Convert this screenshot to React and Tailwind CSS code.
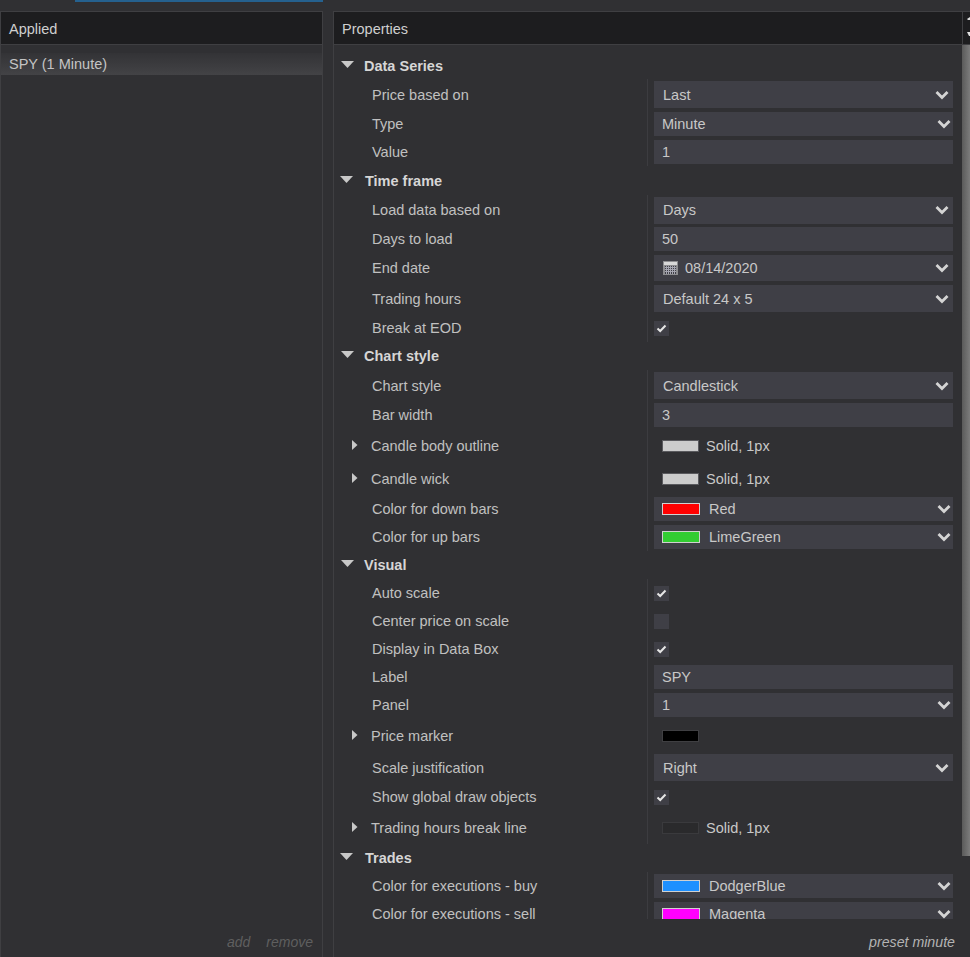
import React from 'react';

const Chevron = () => (
  <svg width="14" height="10" viewBox="0 0 14 10" className="shrink-0">
    <path d="M1.5 2 L7 7.5 L12.5 2" fill="none" stroke="#d4d4d4" strokeWidth="2.8" />
  </svg>
);

const Caret = ({ open }) =>
  open ? (
    <svg width="14" height="8" viewBox="0 0 14 8" className="-mt-[2px] shrink-0">
      <path d="M0 0 H13 L6.5 7 Z" fill="#c8c8c8" />
    </svg>
  ) : (
    <svg width="6" height="10" viewBox="0 0 6 10" className="-mt-[1px] shrink-0">
      <path d="M0 0 L5.5 5 L0 10 Z" fill="#c8c8c8" />
    </svg>
  );

const CalendarIcon = () => (
  <svg width="15" height="14" viewBox="0 0 15 14" className="shrink-0">
    <rect x="0" y="0" width="15" height="14" fill="#8d8d90" />
    <rect x="1" y="1" width="13" height="3" fill="#d8d8d8" />
    <rect x="2" y="5" width="11" height="8" fill="#3f3f46" />
    <path d="M2 6.5 H13 M2 8.5 H13 M2 10.5 H13 M3.5 5 V13 M5.5 5 V13 M7.5 5 V13 M9.5 5 V13 M11.5 5 V13" stroke="#a5a5b0" strokeWidth="1" />
  </svg>
);

const Checkbox = ({ checked }) => (
  <div className="flex h-[15px] w-[15px] items-center justify-center bg-[#3f3f46]">
    {checked && (
      <svg width="11" height="9" viewBox="0 0 11 9">
        <path d="M1.5 4.5 L4.2 7 L9.5 1.5" fill="none" stroke="#e6e6e6" strokeWidth="2" />
      </svg>
    )}
  </div>
);

const Swatch = ({ color }) => (
  <span className={`h-[12px] w-[38px] shrink-0 border border-[#d0d0d0] ${color}`} />
);

// the taller selects sit 1px further in than the short ones
const Select = ({ tall, h = 'h-[27px]', children }) => (
  <div className={`flex ${tall ? `${h} pl-[9px] pr-[4px]` : 'h-[24px] pl-2 pr-[2px]'} items-center justify-between bg-[#3f3f46] text-[#c8c8c8]`}>
    <div className="flex items-center gap-[9px]">{children}</div>
    <Chevron />
  </div>
);

const Text = ({ children, className = '' }) => <span className={`pt-[1px] ${className}`}>{children}</span>;

const Input = ({ children }) => (
  <div className="flex h-[24px] items-center bg-[#3f3f46] pl-2 text-[#c8c8c8]">
    <Text>{children}</Text>
  </div>
);

const Group = ({ h, label, pad = 'pl-[7px]', gap = 'gap-[9px]' }) => (
  <div className={`flex ${h} items-center ${gap} ${pad} font-bold text-[#d6d6d6]`}>
    <Caret open />
    <Text>{label}</Text>
  </div>
);

const Row = ({ h, label, expand, children }) => (
  <div className={`flex ${h} items-stretch`}>
    <div className={`flex w-[313px] shrink-0 items-center text-[#c0c0c0] ${expand ? 'gap-[13px] pl-[18px]' : 'pl-[38px]'}`}>
      {expand && <Caret />}
      <Text>{label}</Text>
    </div>
    <div className="flex min-w-0 flex-1 flex-col justify-center border-l border-[#3c3c40] pl-[6px]">{children}</div>
  </div>
);

const LineValue = ({ color, border }) => (
  <div className="flex items-center gap-[7px] pl-2 text-[#c8c8c8]">
    <span className={`h-[12px] w-[37px] shrink-0 border ${border} ${color}`} />
    <Text>Solid, 1px</Text>
  </div>
);

const App = () => {
  return (
    <div className="flex h-[957px] w-[970px] flex-col overflow-hidden bg-[#303033] font-['Liberation_Sans',Arial,sans-serif] text-[14.5px] leading-none">
      <div className="h-[11px] shrink-0">
        <div className="ml-[75px] h-[2px] w-[248px] bg-[#25618f]" />
      </div>
      <div className="flex min-h-0 flex-1">
        <section className="flex w-[323px] shrink-0 flex-col border-t border-r border-l border-[#3f3f42]">
          <div className="flex h-[33px] shrink-0 items-center border-b border-[#3f3f42] bg-[#1d1d1f] pt-[2px] pl-2 text-[#cfcfcf]">Applied</div>
          <div className="mt-2 flex h-[22px] items-center bg-gradient-to-b from-[#333336] to-[#434346] pl-2 text-[#c4c4c4]">SPY (1 Minute)</div>
          <div className="mt-auto flex h-[30px] items-center justify-end gap-[16px] pr-[9px] text-[14px] italic text-[#5f5f5f]">
            <span>add</span>
            <span>remove</span>
          </div>
        </section>
        <section className="ml-[10px] flex min-w-0 flex-1 flex-col border-t border-l border-[#3f3f42]">
          <div className="flex h-[33px] shrink-0 items-stretch border-b border-[#3f3f42] bg-[#1d1d1f] text-[#cfcfcf]">
            <span className="flex flex-1 items-center pt-[2px] pl-2">Properties</span>
            <div className="w-[8px] shrink-0 border-l border-[#3f3f42]">
              <svg width="7" height="32" viewBox="0 0 7 32">
                <path d="M4 7 L7 5 V8 H5 Z M4 20 H7 V24 H6 Z" fill="#e0e0e0" />
              </svg>
            </div>
          </div>
          <div className="flex h-[874px] shrink-0 overflow-hidden">
            <div className="min-w-0 flex-1 pt-[7px] pr-[9px]">
              <Group h="h-[27px]" label="Data Series" />
              <Row h="h-[31px]" label="Price based on"><Select tall><Text>Last</Text></Select></Row>
              <Row h="h-[28px]" label="Type"><Select><Text>Minute</Text></Select></Row>
              <Row h="h-[28px]" label="Value"><Input>1</Input></Row>
              <Group h="h-[29px]" label="Time frame" pad="pl-[6px]" gap="gap-[11px]" />
              <Row h="h-[30px]" label="Load data based on"><Select tall><Text>Days</Text></Select></Row>
              <Row h="h-[28px]" label="Days to load"><Input>50</Input></Row>
              <Row h="h-[30px]" label="End date"><Select tall h="h-[26px]"><CalendarIcon /><Text className="-ml-[2px]">08/14/2020</Text></Select></Row>
              <Row h="h-[31px]" label="Trading hours"><Select tall><Text>Default 24 x 5</Text></Select></Row>
              <Row h="h-[28px]" label="Break at EOD"><Checkbox checked /></Row>
              <Group h="h-[28px]" label="Chart style" />
              <Row h="h-[31px]" label="Chart style"><Select tall><Text>Candlestick</Text></Select></Row>
              <Row h="h-[28px]" label="Bar width"><Input>3</Input></Row>
              <Row h="h-[33px]" label="Candle body outline" expand><LineValue color="bg-[#cccccc]" border="border-[#5a5a5e]" /></Row>
              <Row h="h-[33px]" label="Candle wick" expand><LineValue color="bg-[#cccccc]" border="border-[#5a5a5e]" /></Row>
              <Row h="h-[28px]" label="Color for down bars"><Select><Swatch color="bg-[#ff0000]" /><Text>Red</Text></Select></Row>
              <Row h="h-[28px]" label="Color for up bars"><Select><Swatch color="bg-[#32cd32]" /><Text>LimeGreen</Text></Select></Row>
              <Group h="h-[28px]" label="Visual" />
              <Row h="h-[28px]" label="Auto scale"><Checkbox checked /></Row>
              <Row h="h-[28px]" label="Center price on scale"><Checkbox /></Row>
              <Row h="h-[28px]" label="Display in Data Box"><Checkbox checked /></Row>
              <Row h="h-[28px]" label="Label"><Input>SPY</Input></Row>
              <Row h="h-[28px]" label="Panel"><Select><Text>1</Text></Select></Row>
              <Row h="h-[33px]" label="Price marker" expand>
                <div className="pl-2"><div className="h-[12px] w-[37px] border border-[#3f3f42] bg-black" /></div>
              </Row>
              <Row h="h-[31px]" label="Scale justification"><Select tall><Text>Right</Text></Select></Row>
              <Row h="h-[28px]" label="Show global draw objects"><Checkbox checked /></Row>
              <Row h="h-[33px]" label="Trading hours break line" expand><LineValue color="bg-[#2a2a2c]" border="border-[#3a3a3d]" /></Row>
              <Group h="h-[28px]" label="Trades" pad="pl-[6px]" gap="gap-[11px]" />
              <Row h="h-[28px]" label="Color for executions - buy"><Select><Swatch color="bg-[#1e90ff]" /><Text>DodgerBlue</Text></Select></Row>
              <Row h="h-[28px]" label="Color for executions - sell"><Select><Swatch color="bg-[#ff00ff]" /><Text>Magenta</Text></Select></Row>
            </div>
            <div className="h-[811px] w-[8px] shrink-0 bg-gradient-to-r from-[#5a5a5a] to-[#7c7c7c]" />
          </div>
          <div className="flex flex-1 justify-end pt-[16px] pr-[15px] text-[14.2px] italic text-[#b4b4b4]">preset minute</div>
        </section>
      </div>
    </div>
  );
};

export default App;
